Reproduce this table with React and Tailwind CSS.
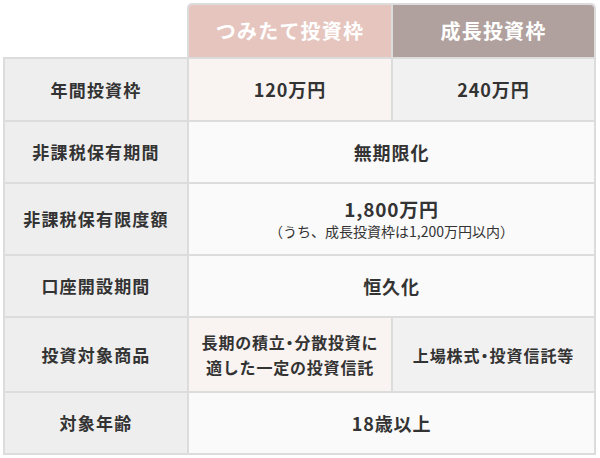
import React from "react";

// narrow middle dot, as set in the reference (proportional alternate)
const Dot = () => <span className="[font-feature-settings:'palt']">・</span>;

const rows = [
  { label: "年間投資枠", h: "h-[61px]", a: "120万円", b: "240万円" },
  { label: "非課税保有期間", h: "h-[60px]", both: "無期限化" },
  { label: "非課税保有限度額", h: "h-[70px]", both: "1,800万円", note: "（うち、成長投資枠は1,200万円以内）" },
  { label: "口座開設期間", h: "h-[60px]", both: "恒久化" },
  {
    label: "投資対象商品",
    h: "h-[73px]",
    a: [
      <span key="l1">長期の積立<Dot />分散投資に</span>,
      <span key="l2">適した一定の投資信託</span>,
    ],
    b: <span>上場株式<Dot />投資信託等</span>,
    small: true,
  },
  { label: "対象年齢", h: "h-[60px]", both: "18歳以上" },
];

const App = () => {
  return (
    <div
      className="w-[600px] h-[458px] bg-white pl-[3px] pt-[3px] text-[#333333]"
      style={{ fontFamily: '"Noto Sans CJK JP", "Noto Sans", sans-serif' }}
    >
      {/* Header */}
      <div className="ml-[184px] w-[409px] grid grid-cols-[202px_201px] gap-[2px] bg-[#dcdcdc] px-[2px] pt-[2px] rounded-t-[5px]">
        <div className="h-[52px] flex items-center justify-center bg-[#e5c5be] text-white font-bold text-[20px] tracking-[0.06em] rounded-tl-[4px]">
          つみたて投資枠
        </div>
        <div className="h-[52px] flex items-center justify-center bg-[#b0a19e] text-white font-bold text-[20px] tracking-[0.06em] rounded-tr-[4px]">
          成長投資枠
        </div>
      </div>

      {/* Body */}
      <div className="w-[593px] grid grid-cols-[182px_202px_201px] gap-[2px] bg-[#dcdcdc] p-[2px]">
        {rows.map((row) => (
          <React.Fragment key={row.label}>
            <div
              className={`${row.h} flex items-center justify-center bg-[#eeeeee] font-bold text-[17px] tracking-[0.07em]`}
            >
              {row.label}
            </div>
            {row.both ? (
              <div
                className={`${row.h} col-span-2 flex flex-col items-center justify-center bg-[#fafafa]`}
              >
                <span
                  className={`font-bold ${row.note ? "text-[19px] leading-[24px] tracking-[0.04em]" : "text-[18px] tracking-[0.05em]"}`}
                >
                  {row.both}
                </span>
                {row.note && (
                  <span className="text-[14px] leading-[20px]">
                    {row.note}
                  </span>
                )}
              </div>
            ) : (
              <>
                <div
                  className={`${row.h} flex flex-col items-center justify-center bg-[#f9f4f2] font-bold ${row.small ? "text-[16px] leading-[25px] tracking-[0.05em]" : "text-[18px] tracking-[0.05em]"}`}
                >
                  {row.a}
                </div>
                <div
                  className={`${row.h} flex items-center justify-center bg-[#f2f1f1] font-bold ${row.small ? "text-[16px] tracking-[0.06em]" : "text-[18px] tracking-[0.05em]"}`}
                >
                  {row.b}
                </div>
              </>
            )}
          </React.Fragment>
        ))}
      </div>
    </div>
  );
};

export default App;
